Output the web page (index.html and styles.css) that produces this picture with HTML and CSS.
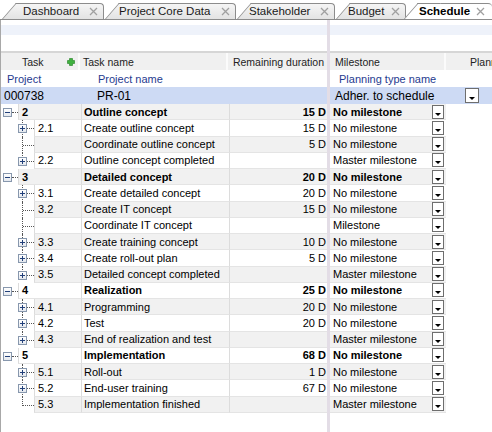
FILE: index.html
```html
<!DOCTYPE html>
<html>
<head>
<meta charset="utf-8">
<link rel="stylesheet" href="styles.css">
</head>
<body>
<div class="app">
  <div class="tabbar">
    <div class="tab t-dash"><span class="tab-label">Dashboard</span><svg class="tab-close" width="9" height="9" viewBox="0 0 9 9"><path d="M1 1L8 8M8 1L1 8"/></svg></div>
    <div class="tab t-core"><span class="tab-label">Project Core Data</span><svg class="tab-close" width="9" height="9" viewBox="0 0 9 9"><path d="M1 1L8 8M8 1L1 8"/></svg></div>
    <div class="tab t-stake"><span class="tab-label">Stakeholder</span><svg class="tab-close" width="9" height="9" viewBox="0 0 9 9"><path d="M1 1L8 8M8 1L1 8"/></svg></div>
    <div class="tab t-budget"><span class="tab-label">Budget</span><svg class="tab-close" width="9" height="9" viewBox="0 0 9 9"><path d="M1 1L8 8M8 1L1 8"/></svg></div>
    <div class="tab t-sched active"><span class="tab-label">Schedule</span><svg class="tab-close" width="9" height="9" viewBox="0 0 9 9"><path d="M1 1L8 8M8 1L1 8"/></svg></div>
  </div>

  <div class="content">
    <div class="pane pane-left">
      <div class="toparea"><div class="band"></div></div>
      <div class="hdr">
        <div class="hc hc-task"><span>Task</span><svg class="add" width="8" height="8" viewBox="0 0 8 8"><path d="M2.5 0.5h3v2h2v3h-2v2h-3v-2h-2v-3h2z"/></svg></div>
        <div class="hc hc-name">Task name</div>
        <div class="hc hc-dur">Remaining duration</div>
      </div>
      <div class="lblrow">
        <span class="lbl lbl-proj">Project</span>
        <span class="lbl lbl-pname">Project name</span>
      </div>
      <div class="projrow">
        <span class="pv pv-id">000738</span>
        <span class="pv pv-name">PR-01</span>
      </div>
      <div class="rows">
        <div class="row l1 even"><div class="tree"><div class="gut"><i class="box minus"></i><i class="hl"></i></div><div class="num">2</div></div><div class="name">Outline concept</div><div class="dur">15 D</div></div>
        <div class="row l2"><div class="tree"><div class="gut"><i class="vl"></i><i class="hl"></i><i class="box plus"></i></div><div class="num">2.1</div></div><div class="name">Create outline concept</div><div class="dur">15 D</div></div>
        <div class="row l2 even"><div class="tree"><div class="gut"><i class="vl"></i><i class="hl"></i></div><div class="num"></div></div><div class="name">Coordinate outline concept</div><div class="dur">5 D</div></div>
        <div class="row l2 last"><div class="tree"><div class="gut"><i class="vl"></i><i class="hl"></i><i class="box plus"></i></div><div class="num">2.2</div></div><div class="name">Outline concept completed</div><div class="dur"></div></div>

        <div class="row l1 even"><div class="tree"><div class="gut"><i class="box minus"></i><i class="hl"></i></div><div class="num">3</div></div><div class="name">Detailed concept</div><div class="dur">20 D</div></div>
        <div class="row l2"><div class="tree"><div class="gut"><i class="vl"></i><i class="hl"></i><i class="box plus"></i></div><div class="num">3.1</div></div><div class="name">Create detailed concept</div><div class="dur">20 D</div></div>
        <div class="row l2 even"><div class="tree"><div class="gut"><i class="vl"></i><i class="hl"></i></div><div class="num">3.2</div></div><div class="name">Create IT concept</div><div class="dur">15 D</div></div>
        <div class="row l2"><div class="tree"><div class="gut"><i class="vl"></i><i class="hl"></i></div><div class="num"></div></div><div class="name">Coordinate IT concept</div><div class="dur"></div></div>
        <div class="row l2 even"><div class="tree"><div class="gut"><i class="vl"></i><i class="hl"></i><i class="box plus"></i></div><div class="num">3.3</div></div><div class="name">Create training concept</div><div class="dur">10 D</div></div>
        <div class="row l2"><div class="tree"><div class="gut"><i class="vl"></i><i class="hl"></i><i class="box plus"></i></div><div class="num">3.4</div></div><div class="name">Create roll-out plan</div><div class="dur">5 D</div></div>
        <div class="row l2 even last"><div class="tree"><div class="gut"><i class="vl"></i><i class="hl"></i><i class="box plus"></i></div><div class="num">3.5</div></div><div class="name">Detailed concept completed</div><div class="dur"></div></div>

        <div class="row l1"><div class="tree"><div class="gut"><i class="box minus"></i><i class="hl"></i></div><div class="num">4</div></div><div class="name">Realization</div><div class="dur">25 D</div></div>
        <div class="row l2 even"><div class="tree"><div class="gut"><i class="vl"></i><i class="hl"></i><i class="box plus"></i></div><div class="num">4.1</div></div><div class="name">Programming</div><div class="dur">20 D</div></div>
        <div class="row l2"><div class="tree"><div class="gut"><i class="vl"></i><i class="hl"></i><i class="box plus"></i></div><div class="num">4.2</div></div><div class="name">Test</div><div class="dur">20 D</div></div>
        <div class="row l2 even last"><div class="tree"><div class="gut"><i class="vl"></i><i class="hl"></i><i class="box plus"></i></div><div class="num">4.3</div></div><div class="name">End of realization and test</div><div class="dur"></div></div>

        <div class="row l1"><div class="tree"><div class="gut"><i class="box minus"></i><i class="hl"></i></div><div class="num">5</div></div><div class="name">Implementation</div><div class="dur">68 D</div></div>
        <div class="row l2 even"><div class="tree"><div class="gut"><i class="vl"></i><i class="hl"></i><i class="box plus"></i></div><div class="num">5.1</div></div><div class="name">Roll-out</div><div class="dur">1 D</div></div>
        <div class="row l2"><div class="tree"><div class="gut"><i class="vl"></i><i class="hl"></i><i class="box plus"></i></div><div class="num">5.2</div></div><div class="name">End-user training</div><div class="dur">67 D</div></div>
        <div class="row l2 even last"><div class="tree"><div class="gut"><i class="vl"></i><i class="hl"></i></div><div class="num">5.3</div></div><div class="name">Implementation finished</div><div class="dur"></div></div>
      </div>
    </div>

    <div class="splitter"></div>

    <div class="pane pane-right">
      <div class="toparea"><div class="band"></div></div>
      <div class="hdr">
        <div class="hc hc-ms">Milestone</div>
        <div class="hc hc-plan">Plann</div>
      </div>
      <div class="lblrow">
        <span class="lbl lbl-ptype">Planning type name</span>
      </div>
      <div class="projrow">
        <span class="pv pv-ptype">Adher. to schedule</span>
        <span class="dd dd-big"></span>
      </div>
      <div class="rows">
        <div class="row r1 even"><div class="ms">No milestone<span class="dd"></span></div><div class="rest"></div></div>
        <div class="row"><div class="ms">No milestone<span class="dd"></span></div><div class="rest"></div></div>
        <div class="row even"><div class="ms">No milestone<span class="dd"></span></div><div class="rest"></div></div>
        <div class="row"><div class="ms">Master milestone<span class="dd"></span></div><div class="rest"></div></div>
        <div class="row r1 even"><div class="ms">No milestone<span class="dd"></span></div><div class="rest"></div></div>
        <div class="row"><div class="ms">No milestone<span class="dd"></span></div><div class="rest"></div></div>
        <div class="row even"><div class="ms">No milestone<span class="dd"></span></div><div class="rest"></div></div>
        <div class="row"><div class="ms">Milestone<span class="dd"></span></div><div class="rest"></div></div>
        <div class="row even"><div class="ms">No milestone<span class="dd"></span></div><div class="rest"></div></div>
        <div class="row"><div class="ms">No milestone<span class="dd"></span></div><div class="rest"></div></div>
        <div class="row even"><div class="ms">Master milestone<span class="dd"></span></div><div class="rest"></div></div>
        <div class="row r1"><div class="ms">No milestone<span class="dd"></span></div><div class="rest"></div></div>
        <div class="row even"><div class="ms">No milestone<span class="dd"></span></div><div class="rest"></div></div>
        <div class="row"><div class="ms">No milestone<span class="dd"></span></div><div class="rest"></div></div>
        <div class="row even"><div class="ms">Master milestone<span class="dd"></span></div><div class="rest"></div></div>
        <div class="row r1"><div class="ms">No milestone<span class="dd"></span></div><div class="rest"></div></div>
        <div class="row even"><div class="ms">No milestone<span class="dd"></span></div><div class="rest"></div></div>
        <div class="row"><div class="ms">No milestone<span class="dd"></span></div><div class="rest"></div></div>
        <div class="row even"><div class="ms">Master milestone<span class="dd"></span></div><div class="rest"></div></div>
      </div>
    </div>
  </div>
</div>
</body>
</html>
```

FILE: styles.css
```css
* { box-sizing: border-box; }
html, body { margin: 0; padding: 0; }
body {
  width: 492px;
  height: 432px;
  overflow: hidden;
  background: #fff;
  font-family: "Liberation Sans", Arial, sans-serif;
  font-size: 11px;
  color: #000;
}
.app { width: 492px; height: 432px; display: flex; flex-direction: column; }

/* ---------- tabs ---------- */
.tabbar {
  display: flex;
  align-items: flex-end;
  height: 20px;
  padding-left: 2px;
  border-bottom: 1px solid #8c8c8c;
  background: #fff;
  flex: none;
  overflow: hidden;
}
.tab {
  position: relative;
  z-index: 0;
  display: flex;
  align-items: center;
  flex: none;
  height: 16px;
  padding: 0 6px 0 19px;
  font-size: 11.5px;
  color: #1a1a1a;
  margin-right: 1px;
}
.tab::before {
  content: "";
  position: absolute;
  top: 0; bottom: 0; left: 14px; right: 0;
  background: linear-gradient(#f5f5f5, #e3e3e3);
  border-top: 1px solid #8c8c8c;
  border-right: 1px solid #8c8c8c;
  border-top-right-radius: 4px;
  z-index: -1;
}
.tab::after {
  content: "";
  position: absolute;
  top: 0; bottom: 0; left: 0;
  width: 22px;
  background: linear-gradient(#f5f5f5, #e3e3e3);
  border-left: 1px solid #8c8c8c;
  border-top: 1px solid #8c8c8c;
  transform: skewX(-41deg);
  transform-origin: bottom left;
  z-index: -1;
}
.tab.active { height: 17px; margin-bottom: -1px; z-index: 1; font-weight: bold; color: #000; padding-bottom: 1px; }
.tab.active::before, .tab.active::after { background: #fff; }
.tab.active::before { border-right: none; }
.tab-label { white-space: nowrap; }
.tab-close { margin-left: auto; flex: none; }
.tab-close path { stroke: #a0a0a0; stroke-width: 1.3; fill: none; }
.t-dash { width: 102px; padding-left: 21px; }
.t-core { width: 131px; padding-left: 14px; }
.t-stake { width: 98px; padding-left: 12px; }
.t-budget { width: 70px; padding-left: 12px; }
.t-sched { width: 89px; margin-left: -4px; padding-left: 16px; padding-right: 7px; }

/* ---------- content ---------- */
.content { flex: 1; display: flex; min-height: 0; }
.pane { display: flex; flex-direction: column; min-width: 0; }
.pane-left { width: 327px; border-left: 1px solid #a8a8a8; }
.pane-right { flex: 1; }
.splitter { width: 3px; background: #e3dde6; flex: none; }

.toparea { height: 33px; padding-top: 5px; border-bottom: 2px solid #d6d6d6; flex: none; }
.band { height: 10px; background: #eef2fa; }

.hdr { display: flex; height: 17px; flex: none; background: #f0f0f0; color: #222; font-size: 10.5px; }
.hc { display: flex; align-items: center; border-right: 2px solid #fbfbfb; white-space: nowrap; overflow: hidden; }
.hc-task { width: 79px; padding-left: 21px; }
.hc-task .add { margin-left: 23px; }
.add path { fill: #3fb23f; stroke: #1f7d1f; stroke-width: 0.6; }
.hc-name { width: 148px; padding-left: 3px; }
.hc-dur { flex: 1; justify-content: flex-end; padding-right: 3px; border-right: none; }
.hc-ms { width: 116px; padding-left: 5px; }
.hc-plan { flex: 1; padding-left: 24px; border-right: none; }

.lblrow { display: flex; align-items: center; height: 17px; flex: none; color: #1f3b8f; font-size: 11px; }
.lbl-proj { width: 97px; padding-left: 6px; }
.lbl-ptype { padding-left: 9px; }

.projrow { display: flex; align-items: center; height: 17px; flex: none; background: #cddaf4; font-size: 12px; }
.pv-id { width: 96px; padding-left: 3px; }
.pv-ptype { padding-left: 5px; }

/* ---------- rows ---------- */
.rows { display: flex; flex-direction: column; }
.row { display: flex; height: 16.25px; flex: none; }
.tree { width: 80px; display: flex; }
.gut { position: relative; flex: none; background: #fff; }
.l1 .gut { width: 17px; }
.l2 .gut { width: 33px; }
.num, .name, .dur, .ms {
  display: flex;
  align-items: center;
  border-bottom: 1px solid #e4e4e4;
  white-space: nowrap;
}
.row.even .num, .row.even .name, .row.even .dur, .row.even .ms { background: #f1f1f1; }
.num { flex: 1; padding-left: 3px; border-left: 1px solid #dcdcdc; }
.name { width: 148px; padding-left: 2px; border-left: 1px solid #dcdcdc; }
.dur { flex: 1; justify-content: flex-end; padding-right: 1px; border-left: 1px solid #dcdcdc; }
.l1 .num, .l1 .name, .l1 .dur, .r1 .ms { font-weight: bold; }
.ms { width: 116px; padding-left: 3px; }
.rest { flex: 1; }

/* tree lines */
.gut i { position: absolute; display: block; }
.box {
  width: 9px; height: 9px; top: 4px;
  border: 1px solid #8797ad;
  background: linear-gradient(#ffffff, #e4e8ee);
  z-index: 1;
}
.l1 .box { left: 2px; }
.l2 .box { left: 17px; }
.box::before {
  content: ""; position: absolute; left: 1px; top: 3px; width: 5px; height: 1px; background: #22407a;
}
.box.plus::after {
  content: ""; position: absolute; left: 3px; top: 1px; width: 1px; height: 5px; background: #22407a;
}
.hl { top: 8px; height: 0; border-top: 1px dotted #555; }
.l1 .hl { left: 11px; width: 6px; }
.l2 .hl { left: 22px; width: 11px; }
.vl { left: 21px; top: 0; bottom: 0; border-left: 1px dotted #555; }
.row.last .vl { bottom: auto; height: 9px; }

/* dropdown */
.dd {
  position: relative;
  display: block;
  flex: none;
  margin-left: auto;
  margin-right: 2px;
  width: 12px;
  height: 14px;
  border: 1px solid #6e6e6e;
  background: #fff;
}
.dd::after {
  content: "";
  position: absolute;
  left: 2px; bottom: 2px;
  width: 0; height: 0;
  border-left: 3px solid transparent;
  border-right: 3px solid transparent;
  border-top: 3px solid #000;
}
.dd.dd-big { margin-right: 13px; width: 14px; height: 15px; }
.dd.dd-big::after { left: 3px; }
```
